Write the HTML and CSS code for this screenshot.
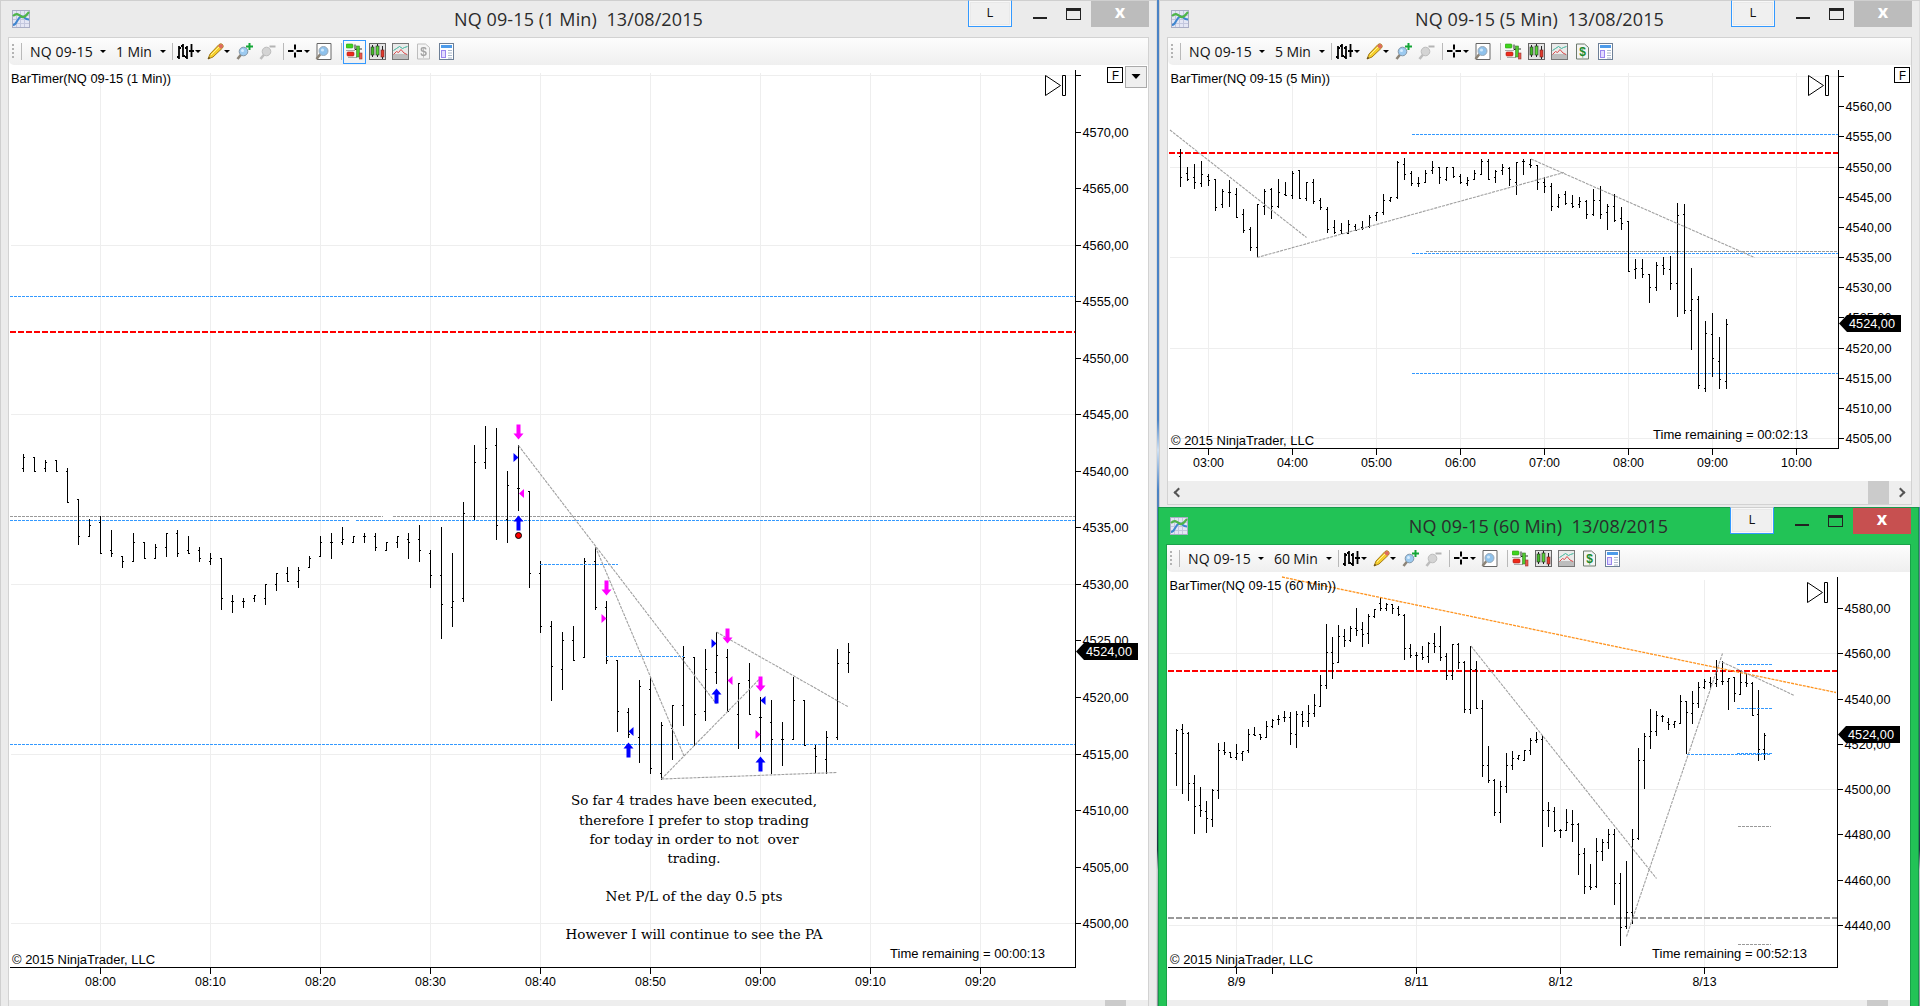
FILE: index.html
```html
<!DOCTYPE html>
<html lang="en">
<head>
    <meta charset="UTF-8">
    <title>NQ 09-15 charts</title>
    <link rel="stylesheet" href="styles.css">
</head>
<body>

    <!-- icon sprite -->
    <svg class="sprite">
        <symbol id="i-app" viewBox="0 0 18 18">
            <rect x=".5" y=".5" width="17" height="17" fill="#e4e6f4" stroke="#a9adc4"/>
            <path d="M4.5 1v16M8.5 1v16M12.500 1v16M1 5.500h16M1 9.500h16M1 13.500h16" stroke="#c3c7de"/>
            <path d="M1 15c4 0 4-7 8-8.500 3-1 3 3 8 3" fill="none" stroke="#3f86cf" stroke-width="2"/>
            <path d="M1 6c4-4 6-1 9 1 3 1 5-3 7-5" fill="none" stroke="#4fb54a" stroke-width="2.200"/>
        </symbol>
        <symbol id="i-bars" viewBox="0 0 17 17">
            <path d="M2 3v13M0 14h2M2 5h2M6 1v13M4 3h2M6 13h2M10 3v13M8 5h2M8 14h2M14.500 1v13M12 8h2M15 8h2" stroke="#000" stroke-width="1.800" fill="none"/>
        </symbol>
        <symbol id="i-pencil" viewBox="0 0 17 17">
            <path d="M1 16l2-5 9-9.500q2-1.500 3.500 0t0 3.500L6 14z" fill="#f5cf2c" stroke="#a67c1b"/>
            <path d="M11 3l3 3 1.800-2q.7-1.500-.5-2.500t-2.500 0z" fill="#dd6b62"/>
            <path d="M4 12l8-8" stroke="#fff09a"/><path d="M1 16l1-2 1 1z" fill="#222"/>
        </symbol>
        <symbol id="i-zoomin" viewBox="0 0 17 17">
            <path d="M1.500 16l4-5" stroke="#8c8478" stroke-width="2.600"/>
            <circle cx="7.500" cy="8.500" r="4.300" fill="#9ccaf0" stroke="#8296a8"/><circle cx="6.500" cy="7.500" r="1.500" fill="#d9eeff"/>
            <path d="M13.500 0v7M10 3.500h7" stroke="#14a637" stroke-width="2"/>
        </symbol>
        <symbol id="i-zoomout" viewBox="0 0 17 17">
            <path d="M1.500 16l4-5" stroke="#bdbdbd" stroke-width="2.600"/>
            <circle cx="7.500" cy="8.500" r="4.300" fill="#d4d4d4" stroke="#bcbcbc"/>
            <path d="M10.500 3.500h6" stroke="#b4b4b4" stroke-width="2"/>
        </symbol>
        <symbol id="i-cross" viewBox="0 0 16 16">
            <path d="M8 1v5M8 9v5M1 7.500h5.500M9.500 7.500H15" stroke="#000" stroke-width="2"/>
        </symbol>
        <symbol id="i-find" viewBox="0 0 17 17">
            <path d="M2 .5h14v16H2z" fill="#fff" stroke="#666"/>
            <path d="M1.500 16l4-5" stroke="#8c8478" stroke-width="2.600"/>
            <circle cx="8.500" cy="8" r="4.500" fill="#8fc2ec" stroke="#9aa9b7"/><circle cx="7.500" cy="7" r="1.600" fill="#cfe8fb"/>
        </symbol>
        <symbol id="i-trader" viewBox="0 0 17 17">
            <path d="M0 7.500h9M2 14.500h9" stroke="#aaa"/><path d="M10 6h6" stroke="#333"/>
            <rect y="1" width="7" height="4" rx="1" fill="#3fd41d" stroke="#2f9c18" stroke-width=".6"/>
            <rect x="1" y="9" width="7" height="4" rx="1" fill="#ee2a1b" stroke="#a92018" stroke-width=".6"/>
            <path d="M9 1.500v5h4" fill="none" stroke="#222"/>
            <rect x="10.500" y="3" width="3" height="11" fill="#4fc82e" stroke="#3a8128" stroke-width=".6"/>
            <rect x="13.500" y="10" width="2.500" height="6" fill="#e8594a" stroke="#933" stroke-width=".6"/>
        </symbol>
        <symbol id="i-candles" viewBox="0 0 17 17">
            <rect x=".5" y=".5" width="16" height="16" fill="#e4e4e4" stroke="#666"/>
            <path d="M3.500 2v12M8.500 1v13M13.500 3v13" stroke="#222"/>
            <rect x="2" y="4" width="3" height="8" fill="#45b92b" stroke="#222" stroke-width=".6"/>
            <rect x="7" y="3" width="3" height="9" fill="#58d53a" stroke="#222" stroke-width=".6"/>
            <rect x="12" y="7" width="3" height="7" fill="#e33b2d" stroke="#622" stroke-width=".6"/>
        </symbol>
        <symbol id="i-lines" viewBox="0 0 17 17">
            <rect x=".5" y=".5" width="16" height="16" fill="#eaeaea" stroke="#777"/>
            <rect x="1" y="11" width="15" height="5" fill="#bdbdbd"/>
            <path d="M1.500 7.500l3-2 3-2 3 2 2-1 3-1" fill="none" stroke="#3bb69b"/>
            <path d="M1.500 11.500l3-3 2 1 2.500-3 3 3.500 3 1.500" fill="none" stroke="#dc4b4b"/>
        </symbol>
        <symbol id="i-dollar" viewBox="0 0 17 17">
            <path d="M2.500 1h8l4 3.500V16h-12z" fill="#f4f4f4" stroke="currentColor"/>
            <text class="dollar" x="8.500" y="13">$</text>
        </symbol>
        <symbol id="i-box" viewBox="0 0 17 17">
            <rect x="1.500" y=".5" width="14" height="16" fill="#fff" stroke="#6d7f96"/>
            <rect x="3" y="2" width="11" height="3" fill="#4d9bea"/><rect x="3.500" y="7.500" width="4" height="7" fill="#e3dbff" stroke="#9a86ee"/>
            <path d="M10 7.500h4M10 10h4M10 12.500h4M10 15h4" stroke="#aab8cb"/>
        </symbol>
    </svg>

    <div class="desktop">

        <!-- 1 minute chart -->
        <section class="window win-1min">
            <header class="titlebar">
                <svg class="app-icon"><use href="#i-app"/></svg>
                <h1 class="title">NQ 09-15 (1 Min)&nbsp; 13/08/2015</h1>
                <div class="controls"><span class="link-btn">L</span><i class="min"></i><i class="max"></i><span class="close">x</span></div>
            </header>
            <div class="client">
                <div class="toolbar">
                    <i class="grip"></i><i class="sep"></i>
                    <span class="pick symbol">NQ 09-15</span><i class="caret"></i>
                    <span class="pick period">1 Min</span><i class="caret"></i><i class="sep"></i>
                    <svg class="ico bars"><use href="#i-bars"/></svg><i class="caret"></i>
                    <svg class="ico pencil"><use href="#i-pencil"/></svg><i class="caret"></i>
                    <svg class="ico zoomin"><use href="#i-zoomin"/></svg>
                    <svg class="ico"><use href="#i-zoomout"/></svg><i class="sep wide"></i>
                    <svg class="ico cross"><use href="#i-cross"/></svg><i class="caret"></i>
                    <svg class="ico find"><use href="#i-find"/></svg><i class="sep wide"></i>
                    <span class="tool selected"><svg class="ico"><use href="#i-trader"/></svg></span>
                    <span class="tool"><svg class="ico"><use href="#i-candles"/></svg></span>
                    <span class="tool"><svg class="ico"><use href="#i-lines"/></svg></span>
                    <span class="tool off"><svg class="ico"><use href="#i-dollar"/></svg></span>
                    <span class="tool"><svg class="ico"><use href="#i-box"/></svg></span>
                </div>
                <svg class="chart" id="chart1" viewBox="9 65 1139 935" width="1139" height="935"></svg>
                <div class="scrollbar"><i class="arrow left"></i><i class="thumb"></i><i class="arrow right"></i></div>
            </div>
        </section>

        <!-- 5 minute chart -->
        <section class="window win-5min">
            <header class="titlebar">
                <svg class="app-icon"><use href="#i-app"/></svg>
                <h1 class="title">NQ 09-15 (5 Min)&nbsp; 13/08/2015</h1>
                <div class="controls"><span class="link-btn">L</span><i class="min"></i><i class="max"></i><span class="close">x</span></div>
            </header>
            <div class="client">
                <div class="toolbar">
                    <i class="grip"></i><i class="sep"></i>
                    <span class="pick symbol">NQ 09-15</span><i class="caret"></i>
                    <span class="pick period">5 Min</span><i class="caret"></i><i class="sep"></i>
                    <svg class="ico bars"><use href="#i-bars"/></svg><i class="caret"></i>
                    <svg class="ico pencil"><use href="#i-pencil"/></svg><i class="caret"></i>
                    <svg class="ico zoomin"><use href="#i-zoomin"/></svg>
                    <svg class="ico"><use href="#i-zoomout"/></svg><i class="sep wide"></i>
                    <svg class="ico cross"><use href="#i-cross"/></svg><i class="caret"></i>
                    <svg class="ico find"><use href="#i-find"/></svg><i class="sep wide"></i>
                    <span class="tool"><svg class="ico"><use href="#i-trader"/></svg></span>
                    <span class="tool"><svg class="ico"><use href="#i-candles"/></svg></span>
                    <span class="tool"><svg class="ico"><use href="#i-lines"/></svg></span>
                    <span class="tool"><svg class="ico"><use href="#i-dollar"/></svg></span>
                    <span class="tool"><svg class="ico"><use href="#i-box"/></svg></span>
                </div>
                <svg class="chart" id="chart5" viewBox="1168 65 743 416" width="743" height="416"></svg>
                <div class="scrollbar"><i class="arrow left"></i><i class="thumb"></i><i class="arrow right"></i></div>
            </div>
        </section>

        <!-- 60 minute chart, active window -->
        <section class="window win-60min active">
            <header class="titlebar">
                <svg class="app-icon"><use href="#i-app"/></svg>
                <h1 class="title">NQ 09-15 (60 Min)&nbsp; 13/08/2015</h1>
                <div class="controls"><span class="link-btn">L</span><i class="min"></i><i class="max"></i><span class="close">x</span></div>
            </header>
            <div class="client">
                <div class="toolbar">
                    <i class="grip"></i><i class="sep"></i>
                    <span class="pick symbol">NQ 09-15</span><i class="caret"></i>
                    <span class="pick period long">60 Min</span><i class="caret"></i><i class="sep"></i>
                    <svg class="ico bars"><use href="#i-bars"/></svg><i class="caret"></i>
                    <svg class="ico pencil"><use href="#i-pencil"/></svg><i class="caret"></i>
                    <svg class="ico zoomin"><use href="#i-zoomin"/></svg>
                    <svg class="ico"><use href="#i-zoomout"/></svg><i class="sep wide"></i>
                    <svg class="ico cross"><use href="#i-cross"/></svg><i class="caret"></i>
                    <svg class="ico find"><use href="#i-find"/></svg><i class="sep wide"></i>
                    <span class="tool"><svg class="ico"><use href="#i-trader"/></svg></span>
                    <span class="tool"><svg class="ico"><use href="#i-candles"/></svg></span>
                    <span class="tool"><svg class="ico"><use href="#i-lines"/></svg></span>
                    <span class="tool"><svg class="ico"><use href="#i-dollar"/></svg></span>
                    <span class="tool"><svg class="ico"><use href="#i-box"/></svg></span>
                </div>
                <svg class="chart" id="chart60" viewBox="1167 572 743 428" width="743" height="428"></svg>
                <div class="scrollbar"><i class="arrow left"></i><i class="thumb"></i><i class="arrow right"></i></div>
            </div>
        </section>

    </div>

    <script src="charts.js"></script>
</body>
</html>
```

FILE: styles.css
```css
body {
    margin: 0;
    font-family: "Open Sans", "Noto Sans", sans-serif;
    color: #111;
}

.sprite {
    display: none;
}

.desktop {
    position: relative;
    width: 1920px;
    height: 1006px;
    overflow: hidden;
    background: linear-gradient(#4a83c6 0, #4a83c6 420px, #cfe0f2 450px, #4a83c6 490px, #6b7f93 560px, #2f4a60 800px, #1f3344 850px, #c2c8cc 870px, #8b949a 1006px);
}

/* windows */
.window {
    position: absolute;
    display: flex;
    flex-direction: column;
    box-sizing: border-box;
    padding: 0 8px;
    background: #ebebeb;
    box-shadow: inset 1px 1px 0 #cfcfcf, inset -1px 0 0 #dcdcdc;
}

.win-1min {
    left: 0;
    top: 0;
    width: 1157px;
    height: 1030px;
}

.win-5min {
    left: 1159px;
    top: 0;
    width: 761px;
    height: 507px;
}

.win-60min {
    left: 1158px;
    top: 507px;
    width: 761px;
    height: 530px;
}

.window.active {
    background: #22c356;
    box-shadow: inset 1px 1px 0 #17984a, inset -1px 0 0 #17984a;
}

.titlebar {
    display: grid;
    grid-template-columns: 1fr auto 1fr;
    height: 37px;
    flex: none;
}

.app-icon {
    width: 18px;
    height: 18px;
    margin: 10px 0 0 4px;
}

.title {
    margin: 0;
    padding-top: 7px;
    font-size: 18px;
    line-height: 25px;
    font-weight: 400;
    letter-spacing: 0.1px;
    color: #2b2b2b;
    white-space: nowrap;
}

.controls {
    display: flex;
    justify-content: flex-end;
    align-items: flex-start;
}

.link-btn {
    box-sizing: border-box;
    width: 44px;
    height: 27px;
    margin: 0 21px 0 0;
    border: 1px solid #3399ff;
    border-top: 1px solid #cfcfcf;
    background: #f0f0f0;
    box-shadow: inset 0 0 0 1px #f8f8f8, inset 0 0 0 2px #e9e9e9;
    font-size: 13px;
    line-height: 23px;
    text-align: center;
}

.min {
    width: 14px;
    height: 2px;
    margin: 17px 19px 0 0;
    background: #222;
}

.max {
    box-sizing: border-box;
    width: 15px;
    height: 12px;
    margin: 8px 10px 0 0;
    border: 1px solid #222;
    border-top-width: 3px;
}

.close {
    width: 58px;
    height: 26px;
    margin-top: 1px;
    background: #bcbcbc;
    color: #fff;
    font-size: 18px;
    font-weight: 700;
    line-height: 20px;
    text-align: center;
}

.active .close {
    background: #c75050;
}

.client {
    display: flex;
    flex-direction: column;
    border: 1px solid #d2d2d2;
    background: #fff;
}

.active .client {
    border-color: #1aa04a;
}

/* toolbar */
.toolbar {
    display: flex;
    align-items: center;
    height: 27px;
    border-radius: 0 0 0 5px;
    background: linear-gradient(#fdfdfd, #efefef);
    font-size: 14px;
}

.grip {
    width: 2px;
    height: 15px;
    margin: 0 7px 0 3px;
    background: repeating-linear-gradient(#b3b3b3 0 2px, transparent 2px 4px);
}

.sep {
    width: 1px;
    height: 17px;
    background: #b9b9b9;
}

.sep.wide {
    margin-left: 7px;
}

.find + .sep.wide {
    margin-left: 9px;
}

.pick {
    height: 20px;
    line-height: 20px;
    white-space: nowrap;
}

.symbol {
    width: 64px;
    margin: 0 6px 0 8px;
    letter-spacing: 0.15px;
}

.period {
    width: 37px;
    margin: 0 7px 0 10px;
    letter-spacing: -0.1px;
}

.period.long {
    width: 45px;
}

.caret {
    width: 0;
    height: 0;
    border: 3px solid transparent;
    border-top-color: #000;
    border-bottom: 0;
}

.caret + .sep {
    margin-left: 6px;
}

.ico {
    width: 17px;
    height: 17px;
    flex: none;
}

.ico.bars {
    margin: 0 1px 0 4px;
}

.ico.pencil {
    margin: 0 0 0 6px;
}

.ico.zoomin {
    margin: 0 6px 0 6px;
}

.ico.cross {
    width: 16px;
    margin: 0 1px 0 3px;
}

.ico.find {
    margin-left: 5px;
}

.tool {
    box-sizing: border-box;
    display: flex;
    justify-content: center;
    width: 23px;
    height: 24px;
    padding: 3px 0;
    color: #6c7a6c;
}

.sep + .tool {
    margin-left: 1px;
}

.tool.selected {
    border: 1px solid #3399ff;
    padding: 2px 0;
}

.dollar {
    font: bold 12px "Liberation Sans", sans-serif;
    text-anchor: middle;
    fill: #1c8a2c;
}

.tool.off {
    color: #999;
    filter: grayscale(1);
    opacity: 0.6;
}

/* scrollbar */
.scrollbar {
    display: flex;
    align-items: center;
    height: 23px;
    padding: 0 7px;
    background: #eeeeee;
}

.thumb {
    width: 21px;
    height: 23px;
    margin: 0 8px 0 auto;
    background: #cbcbcb;
}

.arrow {
    width: 5px;
    height: 5px;
    border: solid #555;
    border-width: 2px 0 0 2px;
    transform: rotate(-45deg);
}

.arrow.right {
    transform: rotate(135deg);
}

/* charts */
.chart {
    display: block;
    font-family: "Liberation Sans", Arial, sans-serif;
    font-size: 13px;
}

.crisp {
    shape-rendering: crispEdges;
}

.trend {
    fill: none;
    stroke: #a0a0a0;
    stroke-width: 1.1;
    stroke-dasharray: 3 1;
}

.trend.orange {
    stroke: #ff9420;
    stroke-width: 1.3;
}

.note {
    font-family: "DejaVu Serif", serif;
    font-size: 13px;
}
```

FILE: charts.js
```js
var BLUE = '#3399ff', GREY = '#999999', GRID = '#eeeeee';

// bars: [high, low, open, close], thirds of a pixel below y0
var bars1 = [
    [162,216,206,172],[171,216,172,214],[180,216,206,187],[180,216,181,214],[204,309,214,307],[297,435,298,409],
    [357,411,409,376],[348,462,367,460],[390,471,451,460],[468,504,469,484],[399,486,484,427],[426,477,427,475],
    [432,477,475,442],[399,471,442,400],[390,471,400,460],[408,462,451,460],[441,486,451,475],[459,495,484,475],
    [474,630,475,595],[585,639,604,604],[594,624,604,604],[585,606,595,586],[552,615,595,553],[519,573,553,520],
    [501,546,520,544],[501,564,544,511],[468,504,502,475],[408,471,469,427],[399,477,427,427],[381,435,427,418],
    [408,429,427,409],[399,429,409,409],[399,453,409,442],[426,453,451,427],[408,444,427,409],[399,477,418,427],
    [375,486,418,451],[450,564,460,526],[381,717,526,613],[459,681,622,604],[306,606,595,340],[135,360,349,187],
    [78,207,187,145],[84,420,136,376],[213,429,358,256],[135,333,265,265],[273,564,274,520],[483,699,520,679],
    [663,903,679,799],[696,870,808,721],[678,783,721,781],[474,774,772,484],[441,630,484,622],[603,792,622,781],
    [780,996,781,934],[924,1014,937,1003],[840,1089,1012,859],[831,1122,868,1105],[966,1140,1120,976],[915,1080,985,916],
    [738,978,916,772],[771,1038,772,943],[747,963,934,808],[696,852,817,766],[747,936,772,934],[849,1047,943,850],
    [789,945,841,943],[891,1056,952,952],[900,1122,967,1018],[966,1098,1018,1018],[831,1020,1018,901],[900,1038,901,1036],
    [1035,1119,1045,1069],[993,1122,1078,1012],[747,1020,1012,790],[729,819,790,757]
];
var bars5 = [
    [117,231,139,202],[171,213,190,208],[162,237,202,217],[153,231,220,193],[192,228,199,211],[207,303,208,292],
    [237,294,283,244],[210,291,247,247],[234,324,253,322],[297,369,313,361],[351,423,358,412],[282,441,412,283],
    [237,315,289,244],[234,327,238,289],[207,294,289,247],[216,258,253,256],[183,267,256,190],[180,267,181,265],
    [216,273,265,217],[207,282,217,274],[264,300,271,292],[291,369,298,358],[330,372,352,367],[339,372,361,370],
    [330,372,370,343],[342,363,349,361],[333,360,352,355],[315,354,349,322],[306,333,316,307],[252,315,307,271],
    [261,276,271,262],[153,267,262,157],[144,210,163,193],[183,228,190,220],[201,231,220,220],[180,219,217,190],
    [153,192,181,172],[171,222,172,202],[171,213,208,172],[171,204,172,199],[192,222,199,217],[201,228,220,211],
    [180,210,208,190],[147,195,193,154],[147,210,154,208],[180,219,202,184],[162,195,181,172],[171,228,175,208],
    [156,255,217,157],[147,195,154,154],[147,174,163,166],[165,240,166,217],[201,249,217,229],[219,303,229,289],
    [252,294,289,262],[243,285,253,280],[255,294,280,289],[261,294,283,274],[270,327,274,313],[237,318,313,271],
    [228,327,271,313],[282,360,307,289],[252,336,289,331],[291,360,325,340],[333,486,334,484],[447,507,478,475],
    [447,504,475,493],[492,579,493,532],[456,543,532,466],[441,495,466,475],[438,540,478,520],[279,621,520,316],
    [282,612,313,601],[474,720,601,568],[558,837,568,826],[633,846,835,670],[609,801,673,745],[681,837,754,808],
    [627,837,814,643]
];
var bars60 = [
    [477,648,550,481],[462,672,478,490],[486,693,490,640],[615,792,640,709],[651,741,706,721],[693,789,724,745],
    [657,771,748,661],[519,687,661,541],[516,555,541,547],[546,564,547,562],[522,570,562,550],[543,573,550,544],
    [477,549,541,493],[471,498,493,496],[492,510,493,502],[453,504,502,469],[447,474,469,451],[435,465,448,448],
    [423,456,442,442],[426,525,442,490],[423,534,493,433],[423,471,433,454],[405,471,454,430],[372,441,430,406],
    [315,411,409,346],[162,357,346,247],[201,327,247,280],[165,279,277,199],[177,231,199,211],[168,216,211,175],
    [114,198,175,181],[156,231,178,193],[132,222,190,139],[117,144,139,118],[81,123,100,115],[99,123,115,103],
    [102,132,103,115],[108,138,115,133],[132,270,136,235],[222,264,235,256],[246,300,256,256],[228,270,250,262],
    [216,279,259,220],[189,249,220,229],[168,273,229,262],[249,330,259,316],[222,330,316,223],[219,297,223,277],
    [273,429,277,418],[228,432,418,298],[273,417,298,415],[390,621,415,586],[528,639,586,631],[627,738,631,727],
    [633,759,727,649],[549,669,649,586],[543,600,586,565],[555,570,565,556],[540,573,571,541],[504,555,541,511],
    [486,519,511,508],[495,831,508,721],[696,771,721,721],[711,786,724,781],[777,804,781,781],[717,783,781,757],
    [720,816,763,763],[759,915,763,853],[834,972,850,949],[882,960,949,952],[804,954,949,844],[807,873,844,817],
    [777,837,817,793],[777,1005,793,940],[909,1128,940,1072],[873,1077,1069,1027],[777,1062,1027,808],[534,810,805,571],
    [489,657,571,499],[417,537,499,484],[423,498,484,436],[435,456,439,439],[444,480,457,463],[453,474,463,454],
    [375,462,460,394],[393,552,394,427],[363,462,430,400],[336,414,400,352],[327,357,352,334],[321,354,337,340],
    [270,351,340,328],[273,345,334,334],[324,420,334,325],[321,396,322,370],[300,375,373,337],[309,351,337,340],
    [336,438,340,436],[360,573,433,538],[489,570,538,496]
];

function rect(x, y, w, h, fill) {
    return '<rect class="crisp" x="' + x + '" y="' + y + '" width="' + w + '" height="' + h + '" fill="' + fill + '"/>';
}

// horizontal dashed level, y is its top pixel row
function level(x1, x2, y, color, thick) {
    var t = thick || 1;
    return '<path class="crisp" d="M' + x1 + ' ' + (y + t / 2) + 'H' + x2 + '" stroke="' + color + '" stroke-width="' + t +
        '" stroke-dasharray="' + (t === 2 ? '6 2' : '3 1') + '"/>';
}

function trend(x1, y1, x2, y2, cls) {
    return '<path class="trend ' + (cls || '') + '" d="M' + x1 + ' ' + y1 + 'L' + x2 + ' ' + y2 + '"/>';
}

function label(x, y, str, width, cls, anchor, fill) {
    return '<text class="' + (cls || '') + '" x="' + x + '" y="' + y + '" textLength="' + width +
        '" lengthAdjust="spacingAndGlyphs" text-anchor="' + (anchor || 'start') + '" fill="' + (fill || '#000') +
        '" xml:space="preserve">' + str + '</text>';
}

function drawBars(list, x0, step, y0) {
    return list.map(function (b, i) {
        var x = x0 + i * step, top = y0 + b[0] / 3;
        return rect(x, top, 1, (b[1] - b[0]) / 3, '#000') +
            rect(x - 1, y0 + Math.floor(b[2] / 3), 1, 1, '#000') +
            rect(x + 1, y0 + Math.floor(b[3] / 3), 1, 1, '#000');
    }).join('');
}

function drawGrid(c) {
    var s = '';
    c.ticks.forEach(function (t) { s += rect(t[0], c.top + 3, 1, c.bottom - c.top - 3, GRID); });
    c.rows.forEach(function (y) { s += rect(c.left + 1, y, c.axis - c.left - 1, 1, GRID); });
    return s;
}

function drawAxes(c) {
    var s = rect(c.axis, c.top, 1, c.bottom - c.top + 1, '#000') + rect(c.left, c.bottom, c.axis - c.left, 1, '#000');
    c.ticks.forEach(function (t) {
        s += rect(t[0], c.bottom, 1, 7, '#000');
        if (t[1]) s += label(t[0] + 0.5, c.bottom + 19, t[1], t[2] || 31, '', 'middle');
    });
    c.prices.forEach(function (p) {
        s += rect(c.axis, p[0], 6, 1, '#000');
        if (p[1]) s += label(c.axis + 7.5, p[0] + 5, p[1] + ',00', 46);
    });
    // last price tag
    var a = c.axis, y = c.tag;
    s += '<path d="M' + (a + 1) + ' ' + (y + 8.5) + 'L' + (a + 9) + ' ' + y + 'H' + (a + 63) + 'V' + (y + 17) + 'H' + (a + 9) + 'z"/>';
    s += label(a + 11, y + 13, '4524,00', 46, '', 'start', '#fff');
    // play button
    var px = a - 30, py = c.top + 5;
    s += '<path d="M' + (px + .5) + ' ' + (py + .5) + 'v20l15-10zM' + (px + 17.5) + ' ' + (py + .5) + 'h3v20h-3z" fill="none" stroke="#000"/>';
    s += label(c.left + 2, c.bottom - 3, '© 2015 NinjaTrader, LLC', 143);
    return s;
}

function framed(x, y) {
    return '<rect x="' + (x + .5) + '" y="' + (y + .5) + '" width="15" height="15" fill="#fff" stroke="#000"/>' + label(x + 5, y + 13, 'F', 7);
}

function arrow(x, y, up) {
    var d = up ? 'l5 6h-3v9h-4v-9h-3z' : 'l5-6h-3v-9h-4v9h-3z';
    return '<path d="M' + x + ' ' + y + d + '" fill="' + (up ? '#0000ff' : '#ff00ff') + '"/>';
}

function pointer(x, y, dir, color) {
    return '<path d="M' + x + ' ' + y + 'l' + (-5 * dir) + ' -4.500v9z" fill="' + color + '"/>';
}

/* 1 min */
var times = ['08:00', '08:10', '08:20', '08:30', '08:40', '08:50', '09:00', '09:10', '09:20'];
var c1 = { axis: 1075, left: 10, top: 70, bottom: 967, tag: 643, rows: [75, 245, 414, 584, 754, 923], prices: [[75, '']], ticks: [] };
times.forEach(function (t, i) { c1.ticks.push([100 + i * 110, t]); });
for (var p = 4570; p >= 4500; p -= 5) c1.prices.push([Math.round(244.7 + (4560 - p) * 11.307), p]);

document.getElementById('chart1').innerHTML = drawGrid(c1) +
    level(10, 1075, 296, BLUE) + level(10, 1075, 331, '#ff0000', 2) +
    level(10, 383, 516, GREY) + level(393, 1075, 516, GREY) +
    level(10, 349, 520, BLUE) + level(356, 1075, 520, BLUE) + level(10, 1075, 744, BLUE) +
    drawBars(bars1, 23, 11, 400) +
    level(540, 618, 564, BLUE) + level(606, 684, 656, BLUE) +
    trend(518.5, 445.5, 716.5, 704) + trend(595.5, 547, 684, 756) + trend(661.5, 779, 760.5, 678) +
    trend(661.5, 779, 837, 772.5) + trend(716.5, 632, 848.5, 707) +
    arrow(518.5, 439.5) + arrow(606.5, 595.5) + arrow(727.5, 643.5) + arrow(760.5, 691.5) +
    arrow(518.5, 515.5, true) + arrow(628.5, 742.5, true) + arrow(716.5, 688.5, true) + arrow(760.5, 756.5, true) +
    pointer(518.5, 457.5, 1, '#0000ff') + pointer(519, 493.5, -1, '#ff00ff') + pointer(606.5, 618.5, 1, '#ff00ff') +
    pointer(628.5, 731.5, -1, '#0000ff') + pointer(716.5, 643.5, 1, '#0000ff') + pointer(727.5, 680.5, -1, '#ff00ff') +
    pointer(760.5, 700.5, -1, '#0000ff') + pointer(760.5, 734.5, 1, '#ff00ff') +
    '<circle cx="518.500" cy="535.500" r="3" fill="#f00" stroke="#000"/>' +
    drawAxes(c1) + framed(1107, 67) +
    '<rect x="1125.500" y="66.500" width="21" height="21" fill="#efefef" stroke="#aaa"/><path d="M1131.500 74h9l-4.500 5z"/>' +
    label(11, 83, 'BarTimer(NQ 09-15 (1 Min))', 160) +
    label(890, 958, 'Time remaining = 00:00:13', 155) +
    label(694, 805, 'So far 4 trades have been executed,', 246, 'note', 'middle') +
    label(694, 824.5, 'therefore I prefer to stop trading', 230, 'note', 'middle') +
    label(694, 844, 'for today in order to not  over', 209, 'note', 'middle') +
    label(694, 863, 'trading.', 53, 'note', 'middle') +
    label(694, 901, 'Net P/L of the day 0.5 pts', 177, 'note', 'middle') +
    label(694, 939, 'However I will continue to see the PA', 257, 'note', 'middle');

/* 5 min */
var c5 = { axis: 1838, left: 1169, top: 70, bottom: 448, tag: 315, rows: [76, 167, 257, 348, 438], prices: [[76, '']], ticks: [] };
for (var h = 3; h <= 10; h++) c5.ticks.push([1208 + (h - 3) * 84, (h < 10 ? '0' : '') + h + ':00']);
for (p = 4560; p >= 4505; p -= 5) c5.prices.push([Math.round(76 + (4565 - p) * 6.035), p]);

document.getElementById('chart5').innerHTML = drawGrid(c5) +
    level(1412, 1838, 134, BLUE) + level(1169, 1838, 152, '#ff0000', 2) +
    level(1426, 1838, 251, GREY) + level(1412, 1838, 253, BLUE) + level(1412, 1838, 373, BLUE) +
    drawBars(bars5, 1180, 7, 110) +
    trend(1170, 130, 1306.5, 237.5) + trend(1257, 257.5, 1564, 172.5) + trend(1531, 159, 1754.5, 257.5) +
    drawAxes(c5) + framed(1894, 67) +
    label(1170.5, 83, 'BarTimer(NQ 09-15 (5 Min))', 159.5) +
    label(1653, 439, 'Time remaining = 00:02:13', 155);

/* 60 min */
var c60 = {
    axis: 1837, left: 1168, top: 577, bottom: 967, tag: 726, rows: [653, 789, 925],
    prices: [[608, 4580], [653, 4560], [699, 4540], [744, 4520], [789, 4500], [834, 4480], [880, 4460], [925, 4440]],
    ticks: [[1236, '8/9', 18], [1272, ''], [1416, '8/11', 24], [1560, '8/12', 24], [1704, '8/13', 24]]
};

document.getElementById('chart60').innerHTML = drawGrid(c60) +
    level(1168, 1837, 670, '#ff0000', 2) + level(1168, 1837, 917, GREY, 2) +
    drawBars(bars60, 1176, 6, 570) +
    level(1737, 1772, 664, BLUE) + level(1737, 1772, 708, BLUE) + level(1737, 1772, 753, BLUE) + level(1687, 1770, 754, BLUE) +
    level(1738, 1771, 826, GREY) + level(1738, 1771, 944, GREY) +
    trend(1282, 577, 1836, 692.5, 'orange') + trend(1471, 646, 1656.5, 878.5) +
    trend(1626.5, 936.5, 1722.5, 653.5) + trend(1722, 662, 1794.5, 695.5) +
    drawAxes(c60) +
    label(1169.5, 590, 'BarTimer(NQ 09-15 (60 Min))', 166.5) +
    label(1652, 958, 'Time remaining = 00:52:13', 155);
```
